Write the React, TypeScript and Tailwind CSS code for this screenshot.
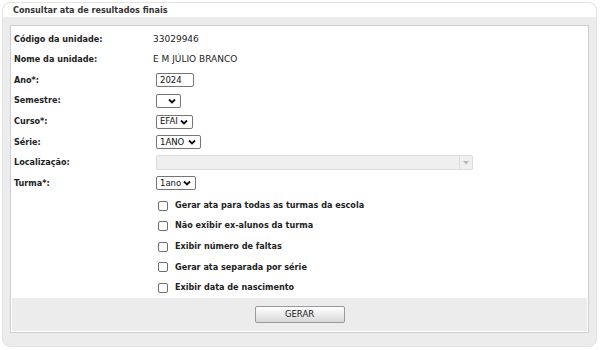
import React from "react";

const font = { fontFamily: '"DejaVu Sans", Verdana, sans-serif' };
const cond = { fontFamily: '"DejaVu Sans Condensed", "DejaVu Sans", Verdana, sans-serif' };

function Chevron() {
  return (
    <svg width="8" height="6" viewBox="0 0 8 6" className="shrink-0">
      <path d="M1 1.5 L4 4.5 L7 1.5" fill="none" stroke="#111" strokeWidth="1.8" />
    </svg>
  );
}

function Select({ value, w }: { value: string; w: string }) {
  return (
    <div className={`flex h-[14px] items-center justify-between rounded-[2px] border border-[#767676] bg-white pl-[3px] pr-[4px] text-[8.5px] text-[#111] ${w}`}>
      <span>{value}</span>
      <Chevron />
    </div>
  );
}

function Row({ label, children, text }: { label: string; children?: React.ReactNode; text?: boolean }) {
  return (
    <div className="flex h-[20.6px] items-center">
      <div className={`${text ? "w-[141px]" : "w-[144px]"} pl-[2px] text-[9px] font-bold text-[#222]`} style={cond}>
        {label}
      </div>
      <div className="flex items-center text-[9px] text-[#222]">{children}</div>
    </div>
  );
}

function Check({ label }: { label: string }) {
  return (
    <div className="flex h-[20.6px] items-center pl-[146px]">
      <div className="h-[10px] w-[10px] rounded-[2px] border border-[#6d6d6d] bg-white" />
      <span className="ml-[7px] text-[9px] font-bold text-[#222]" style={cond}>
        {label}
      </span>
    </div>
  );
}

export default function App() {
  return (
    <div className="h-[350px] w-[600px] bg-white p-[2px]" style={font}>
      <div className="flex h-[345px] w-[595px] flex-col rounded-[8px] border border-[#e3e3e3] bg-[#ececec]">
        <div
          className="flex h-[14px] items-center rounded-t-[8px] bg-white pl-[10px] pt-[1px] text-[9px] font-bold text-[#333]"
          style={cond}
        >
          Consultar ata de resultados finais
        </div>
        <div className="px-[7px] pt-[8px]">
          <div className="border border-[#cfcfcf] bg-white p-px">
            <div className="pt-[2px]">
              <Row label="Código da unidade:" text>
                33029946
              </Row>
              <Row label="Nome da unidade:" text>
                E M JÚLIO BRANCO
              </Row>
              <Row label="Ano*:">
                <div className="flex h-[14px] w-[38px] items-center rounded-[2px] border border-[#767676] pl-[3px] text-[8.5px] text-[#111]">
                  2024
                </div>
              </Row>
              <Row label="Semestre:">
                <Select value="" w="w-[25px]" />
              </Row>
              <Row label="Curso*:">
                <Select value="EFAI" w="w-[37px]" />
              </Row>
              <Row label="Série:">
                <Select value="1ANO" w="w-[45px]" />
              </Row>
              <Row label="Localização:">
                <div className="flex h-[15px] w-[317px] items-stretch rounded-[2px] border border-[#dcdcdc] bg-[#efefef]">
                  <div className="flex-1" />
                  <div className="flex w-[13px] items-center justify-center border-l border-[#dcdcdc]">
                    <svg width="6" height="4" viewBox="0 0 6 4">
                      <path d="M0 0 L6 0 L3 3.5 Z" fill="#b8b8b8" />
                    </svg>
                  </div>
                </div>
              </Row>
              <Row label="Turma*:">
                <Select value="1ano" w="w-[40px]" />
              </Row>
              <div className="pt-[1.5px]">
                <Check label="Gerar ata para todas as turmas da escola" />
                <Check label="Não exibir ex-alunos da turma" />
                <Check label="Exibir número de faltas" />
                <Check label="Gerar ata separada por série" />
                <Check label="Exibir data de nascimento" />
              </div>
            </div>
            <div className="flex h-[33px] items-center justify-center bg-[#ececec]">
              <div className="flex h-[17px] w-[90px] items-center justify-center rounded-[2px] border border-[#9a9a9a] bg-gradient-to-b from-white to-[#d8d8d8] text-[8.5px] text-[#222]">
                GERAR
              </div>
            </div>
          </div>
        </div>
      </div>
    </div>
  );
}
